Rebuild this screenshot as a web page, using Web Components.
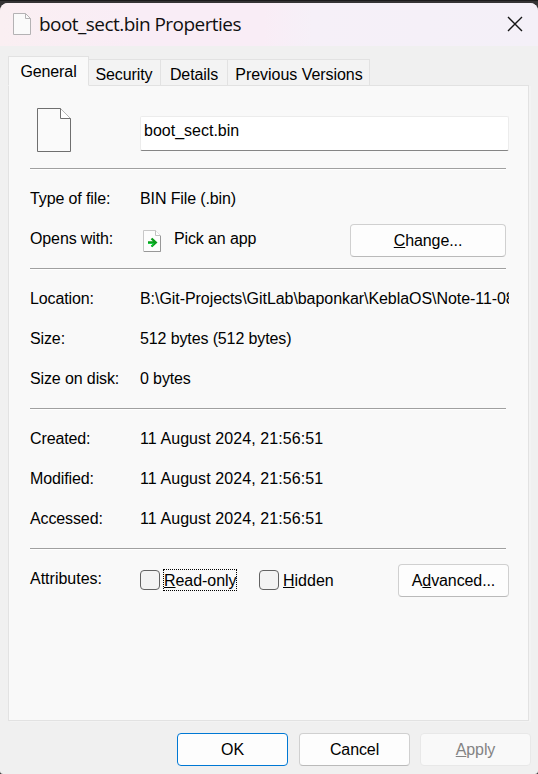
<!DOCTYPE html>
<html lang="en">
<head>
<meta charset="utf-8">
<title>boot_sect.bin Properties</title>
<style>
  html, body { margin: 0; height: 100%; overflow: hidden; background: #2b2a2b; }
  body { font: 16px/20px "Liberation Sans", Arial, sans-serif; color: #000; }
</style>
</head>
<body>
<property-dialog>
  <title-bar slot="title">boot_sect.bin Properties</title-bar>
  <tab-strip slot="tabs">
    <tab-item active style="--w:80px">General</tab-item>
    <tab-item style="--w:72px;padding-right:1px">Security</tab-item>
    <tab-item style="--w:67px">Details</tab-item>
    <tab-item style="--w:142px;letter-spacing:-.04px;padding-left:1px">Previous Versions</tab-item>
  </tab-strip>
  <file-name>boot_sect.bin</file-name>
  <prop-group>
    <prop-row label="Type of file:">BIN File (.bin)</prop-row>
    <prop-row label="Opens with:"><app-choice>Pick an app</app-choice><push-button slot="action" style="--w:156px;margin-right:3px"><u>C</u>hange...</push-button></prop-row>
  </prop-group>
  <prop-group>
    <prop-row class="path" label="Location:">B:\Git-Projects\GitLab\baponkar\KeblaOS\Note-11-08</prop-row>
    <prop-row label="Size:">512 bytes (512 bytes)</prop-row>
    <prop-row label="Size on disk:">0 bytes</prop-row>
  </prop-group>
  <prop-group>
    <prop-row class="date" label="Created:">11 August 2024, 21:56:51</prop-row>
    <prop-row class="date" label="Modified:">11 August 2024, 21:56:51</prop-row>
    <prop-row class="date" label="Accessed:">11 August 2024, 21:56:51</prop-row>
  </prop-group>
  <prop-group>
    <prop-row class="attrs" label="Attributes:">
      <check-group><check-box focused style="--w:119px"><u>R</u>ead-only</check-box><check-box><u>H</u>idden</check-box></check-group>
      <push-button slot="action" style="--w:111px;margin-top:4px">A<u>d</u>vanced...</push-button>
    </prop-row>
  </prop-group>
  <push-button slot="footer" class="primary">OK</push-button>
  <push-button slot="footer">Cancel</push-button>
  <push-button slot="footer" disabled style="margin-left:-1px"><u>A</u>pply</push-button>
</property-dialog>
<script>
const define = (name, html) => customElements.define(name, class extends HTMLElement {
  constructor() {
    super();
    const t = document.createElement('template');
    t.innerHTML = html;
    this.attachShadow({ mode: 'open' }).append(t.content.cloneNode(true));
  }
  connectedCallback() {
    const label = this.shadowRoot.querySelector('.label');
    if (label) label.textContent = this.getAttribute('label');
  }
});

define('property-dialog', `
<style>
  :host { display: flex; flex-direction: column; box-sizing: border-box; width: 538px; height: 774px; padding-top: 3px;
    background: linear-gradient(#1c1c1c 0 1px, #353435 1px 3px, #353435); }
  .window { flex: 1; display: flex; flex-direction: column; background: #f0f0f0; border-radius: 8px 8px 3px 3px; overflow: hidden; }
  .tabs { padding: 10px 0 0 8px; }
  main { box-sizing: border-box; width: 521px; height: 636px; margin: -1px 0 0 8px; padding: 20px 19px 0 21px;
    background: #f9f9f9; border: 1px solid #e2e2e2; box-shadow: 2px 1px 0 #f3f3f3; }
  footer { display: flex; gap: 11px; padding: 12px 7px 0 177px; }
</style>
<div class="window">
  <slot name="title"></slot>
  <div class="tabs"><slot name="tabs"></slot></div>
  <main><slot></slot></main>
  <footer><slot name="footer"></slot></footer>
</div>`);

define('title-bar', `
<style>
  :host { display: flex; align-items: center; box-sizing: border-box; height: 43px; padding: 0 15px 0 13px;
    background: linear-gradient(90deg, #faeff2 0, #f9edf6 25%, #f9edf6 49%, #f6f0f8 58%, #f4f0f8); color: #101010; }
  .text { flex: 1; margin: -2px 0 0 8px; font: 19px/26px "Open Sans", "Noto Sans", sans-serif; letter-spacing: -.55px; white-space: nowrap; }
  svg { display: block; margin-bottom: 2px; }
</style>
<svg width="18" height="22" viewBox="0 0 18 22"><path d="M.5.5h12l5 5v16H.5z" fill="#fafafa" stroke="#b4b2b4"/><path d="M12.5.5v5h5" fill="none" stroke="#b4b2b4"/></svg>
<span class="text"><slot></slot></span>
<svg width="16" height="16" viewBox="0 0 16 16"><path d="M1 1l14 14M15 1L1 15" stroke="#151515" stroke-width="1.4" fill="none"/></svg>`);

define('tab-strip', `
<style>:host { display: flex; align-items: flex-end; height: 30px; position: relative; }</style><slot></slot>`);

define('tab-item', `
<style>
  :host { display: flex; justify-content: center; align-items: center; box-sizing: border-box; width: var(--w); height: 27px; padding-top: 4px;
    background: #f3f3f3; border: 1px solid #e2e2e2; border-left: 0; white-space: nowrap; letter-spacing: -.1px; }
  :host([active]) { width: calc(var(--w) + 1px); height: 30px; padding: 1px 0 0; border-left: 1px solid #e2e2e2; border-bottom-color: #f9f9f9; background: #f9f9f9; }
</style><slot></slot>`);

define('file-name', `
<style>
  :host { display: flex; height: 62px; }
  .icon { width: 110px; padding: 2px 0 0 7px; box-sizing: border-box; }
  .field { box-sizing: border-box; width: 369px; height: 35px; margin-top: 10px; padding: 4px 3px;
    background: #fff; border: 1px solid #ececec; border-bottom-color: #858585; border-radius: 2px; }
</style>
<div class="icon"><svg width="34" height="44" viewBox="0 0 34 44"><path d="M.5.5h23l10 10v33H.5z" fill="#fafafa" stroke="#6f6f6f"/><path d="M23.500.5v10h10" fill="#fff" stroke="#6f6f6f"/></svg></div>
<div class="field"><slot></slot></div>`);

define('prop-group', `
<style>
  :host { display: block; padding: 8px 0 10px; }
  .rule { width: 476px; height: 1px; margin: -8px 0 9px; background: #a0a0a0; box-shadow: 0 1px #fff; }
</style><div class="rule"></div><slot></slot>`);

define('prop-row', `
<style>
  :host { display: flex; align-items: center; height: 40px; width: 479px; white-space: nowrap; letter-spacing: -.12px; }
  .label { width: 110px; flex: none; padding-top: 2px; }
  .value { flex: 1; min-width: 0; overflow: hidden; padding-top: 2px; }
  :host(.date) .value { letter-spacing: .08px; }
  :host(.path) .value { letter-spacing: -.06px; }
  :host(.attrs) .label { letter-spacing: 0; }
  ::slotted([slot=action]) { margin-top: 4px; }
</style><span class="label"></span><div class="value"><slot></slot></div><slot name="action"></slot>`);

define('app-choice', `
<style>
  :host { display: flex; align-items: center; height: 30px; }
  svg { margin: 4px 12px 0 3px; }
</style>
<svg width="19" height="23" viewBox="0 0 19 23"><path d="M.5.5h12l5 5v16H.5z" fill="#fdfdfd" stroke="#c8c8c8"/><path d="M17.500 6v15.500H1" fill="none" stroke="#989898"/><path d="M12.500.5v5h5" fill="#fff" stroke="#c0c0c0"/><path d="M5 12.500h7M8.500 8.500l4.300 4-4.300 4" fill="none" stroke="#0b9d1b" stroke-width="2.300"/><path d="M5 13.500h5.500l-2 3" fill="none" stroke="#16d343"/></svg>
<slot></slot>`);

define('check-group', `<style>:host { display: flex; height: 24px; padding-top: 2px; align-items: center; letter-spacing: 0; }</style><slot></slot>`);

define('check-box', `
<style>
  :host { display: flex; align-items: center; width: var(--w, auto); height: 24px; }
  i { box-sizing: border-box; width: 20px; height: 20px; border: 1px solid #626262; border-radius: 4px; background: #f3f3f3; }
  .text { box-sizing: border-box; height: 22px; margin-left: 3px; border: 1px solid transparent; line-height: 22px; }
  :host([focused]) .text { border: 1px dotted #000; width: 74px; letter-spacing: -.05px; }
  ::slotted(u) { text-decoration-thickness: 1px; text-underline-offset: 1px; text-decoration-skip-ink: none; }
</style><i></i><span class="text"><slot></slot></span>`);

define('push-button', `
<style>
  :host { display: flex; flex: none; justify-content: center; align-items: center; box-sizing: border-box; width: var(--w, 111px); height: 33px;
    background: #fdfdfd; border: 1px solid #d0d0d0; border-bottom-color: #bababa; border-radius: 4px; letter-spacing: -.1px; }
  :host([slot=action]) { padding-top: 1px; }
  :host(.primary) { border-color: #0078d4; }
  :host([disabled]) { color: #838383; background: #f9f9f9; border-color: #e8e8e8; }
  ::slotted(u) { text-decoration-thickness: 1px; text-underline-offset: 1px; text-decoration-skip-ink: none; }
</style><span><slot></slot></span>`);
</script>
</body>
</html>
